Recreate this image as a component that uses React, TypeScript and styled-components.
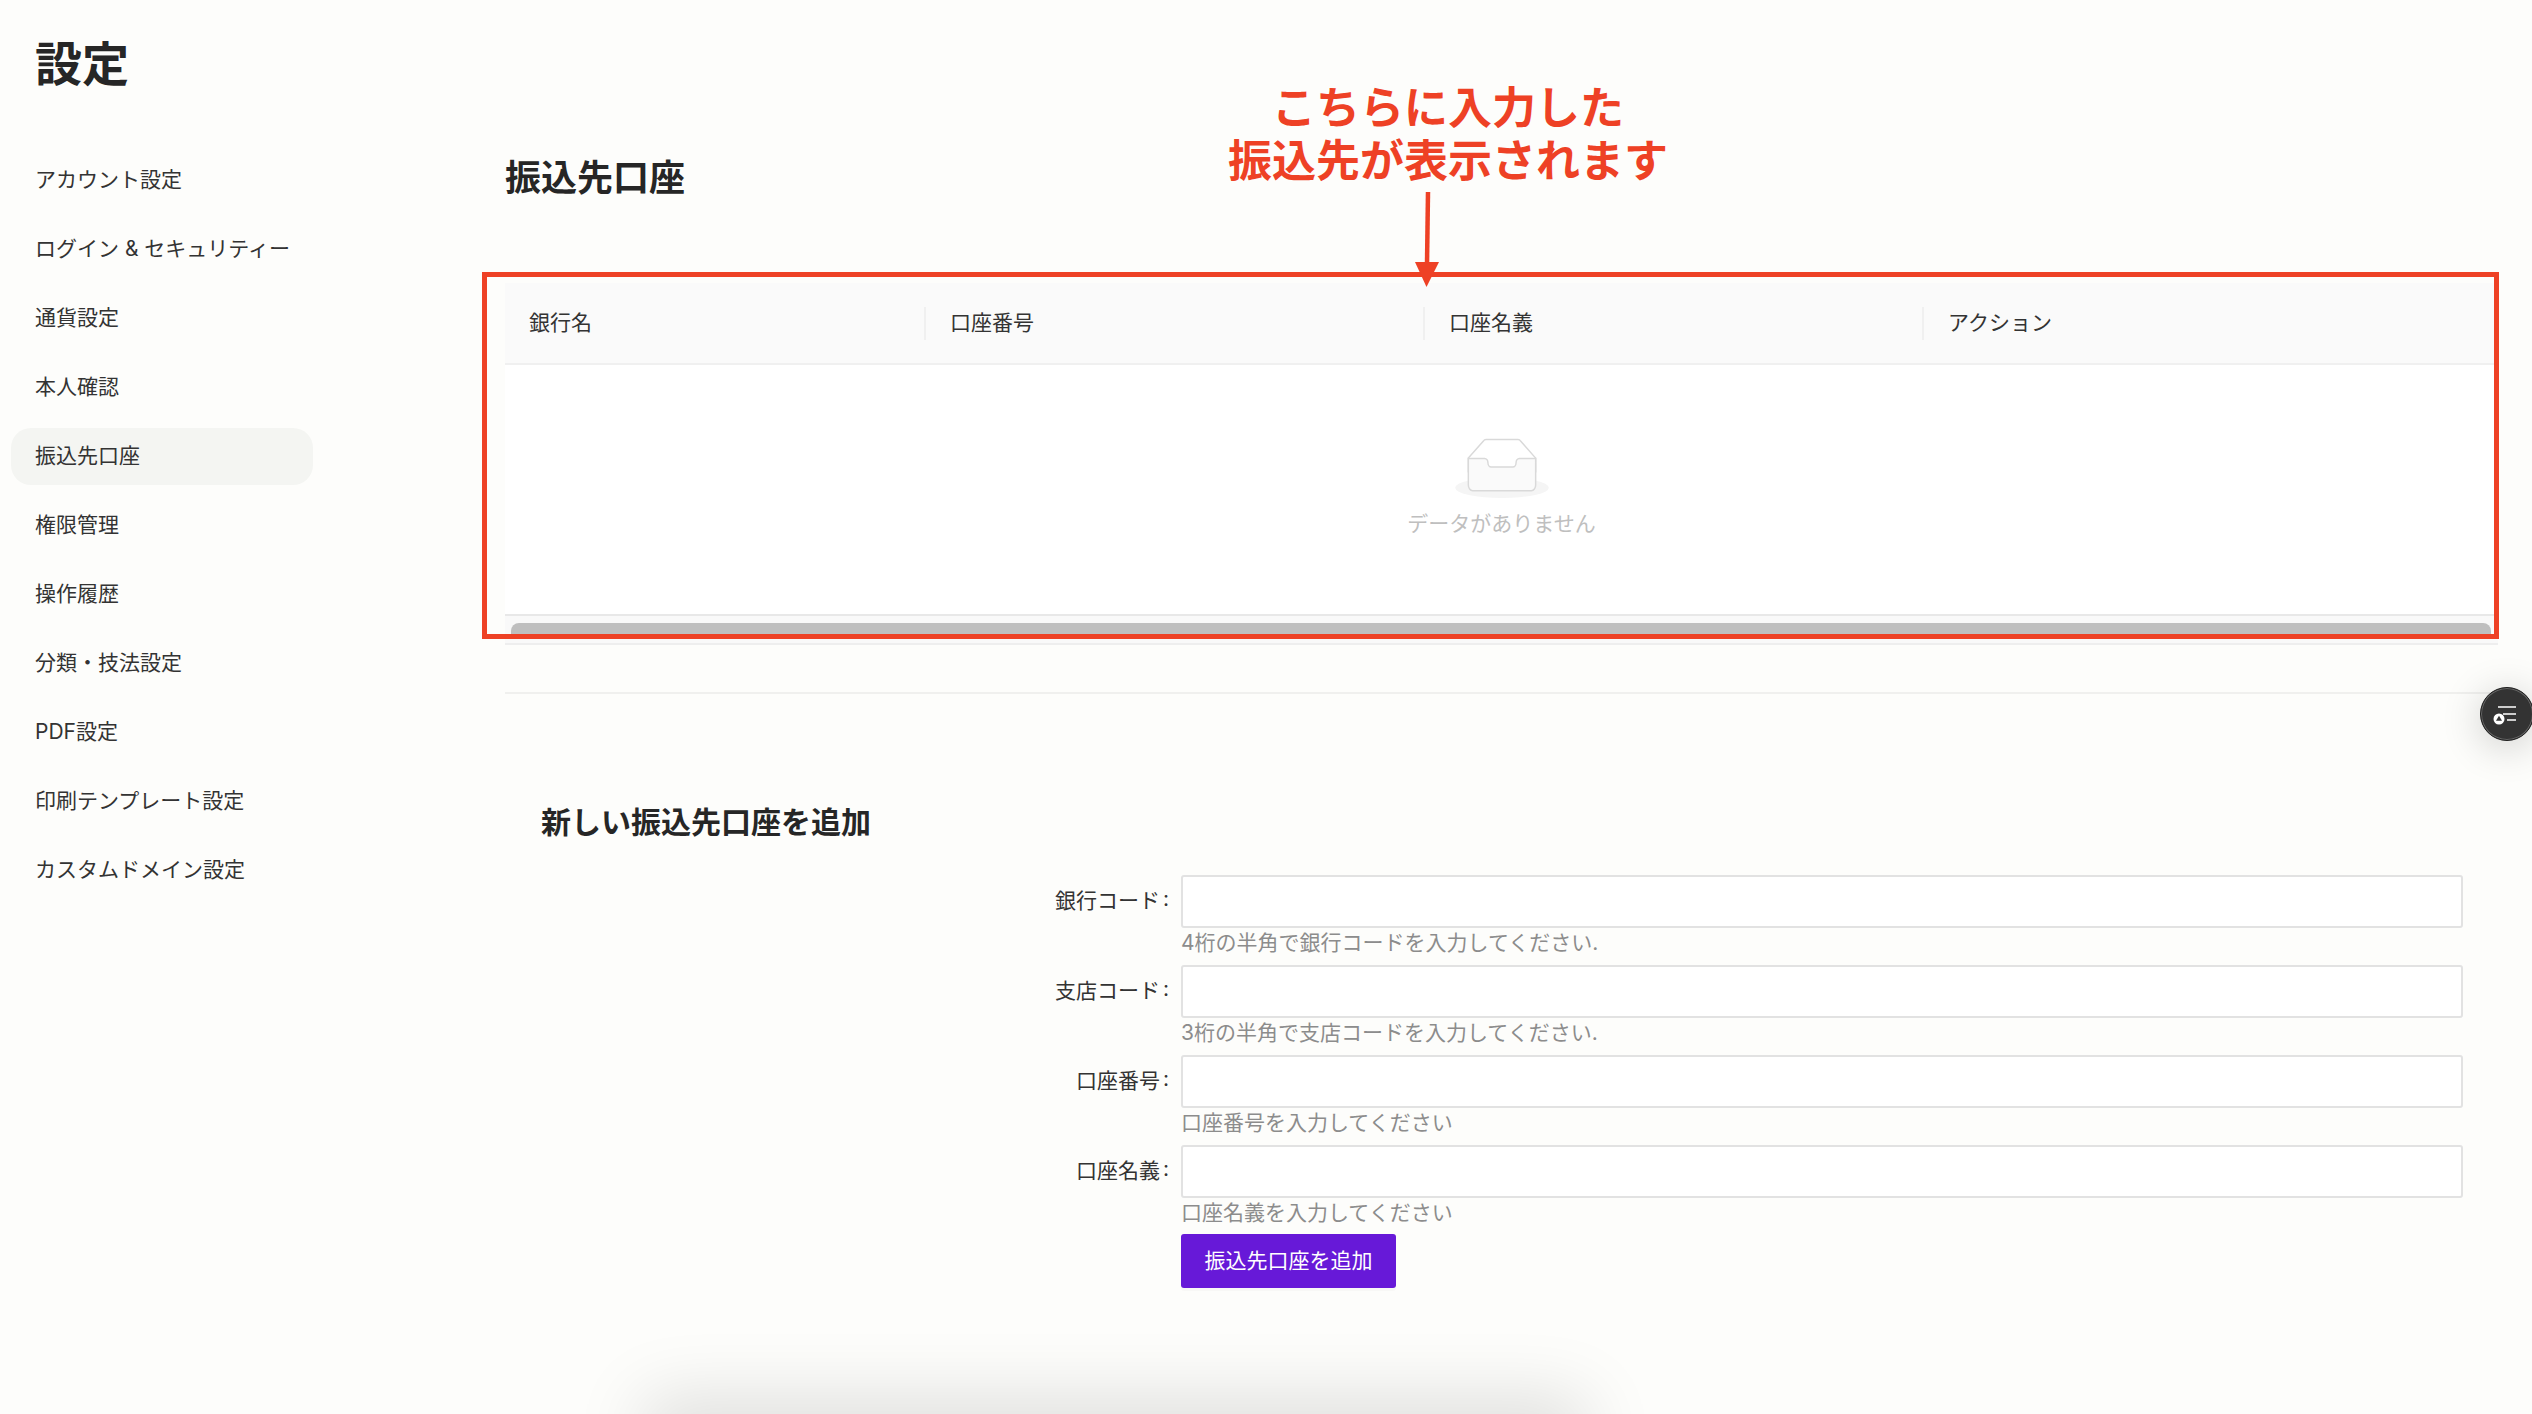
import styled, { createGlobalStyle } from 'styled-components'

const GlobalStyle = createGlobalStyle`
    html, body {
        margin: 0;
        padding: 0;
        background-color: #fdfdfb;
    }
    * {
        box-sizing: border-box;
    }
`

const Page = styled.div`
    position: relative;
    display: flex;
    width: 2532px;
    height: 1414px;
    overflow: hidden;
    background-color: #fdfdfb;
    color: #333333;
    font-family: Inter, 'Noto Sans CJK JP', sans-serif;
    font-size: 21px;
`

const Sidebar = styled.aside`
    flex: 0 0 505px;
    padding: 32px 0 0 11px;
`

const PageTitle = styled.h1`
    margin: 0 0 56px 24px;
    font-size: 47px;
    line-height: 64px;
    font-weight: 700;
    color: #262626;
`

const Nav = styled.nav`
    display: flex;
    flex-direction: column;
    gap: 12px;
    width: 302px;
`

const NavItem = styled.div<{ $active?: boolean }>`
    display: flex;
    align-items: center;
    height: 57px;
    padding: 0 0 5px 24px;
    border-radius: 20px;
    background-color: ${props => (props.$active ? '#f4f5f2' : 'transparent')};
    white-space: nowrap;
`

const Main = styled.main`
    flex: 1;
    padding: 153px 34px 0 0;
`

const SectionTitle = styled.h2`
    margin: 0 0 80px;
    font-size: 36px;
    line-height: 50px;
    font-weight: 700;
    color: #262626;
`

const Table = styled.div`
    background-color: #ffffff;
    border-bottom: 2px solid #eeeeee;
`

const TableHead = styled.div`
    display: grid;
    grid-template-columns: 419px 499px 499px 1fr;
    height: 82px;
    background-color: #fafafa;
    border-bottom: 2px solid #f0f0f0;
`

const HeadCell = styled.div`
    position: relative;
    display: flex;
    align-items: center;
    padding: 0 0 4px 24px;
    & + & {
        padding-left: 26px;
    }
    & + &::before {
        content: '';
        position: absolute;
        left: 0;
        top: 24px;
        height: 33px;
        width: 2px;
        background-color: #f0f0f0;
    }
`

const EmptyBody = styled.div`
    display: flex;
    flex-direction: column;
    align-items: center;
    height: 249px;
    padding-top: 73px;
    color: #bfbfbf;
`

const EmptyText = styled.div`
    margin-top: 10px;
    line-height: 32px;
`

const ScrollTrack = styled.div`
    height: 29px;
    padding: 7px 7px 0 6px;
    background-color: #f9f9f9;
    border-top: 2px solid #e8e8e8;
`

const ScrollThumb = styled.div`
    height: 14px;
    border-radius: 8px 8px 0 0;
    background-color: #bfbfbf;
`

const Divider = styled.hr`
    height: 2px;
    margin: 47px 0 107px;
    border: 0;
    background-color: #f0f0ee;
`

const FormSection = styled.section`
    padding: 0 35px 0 36px;
`

const FormTitle = styled.h3`
    margin: 0 0 32px;
    font-size: 30px;
    line-height: 42px;
    font-weight: 700;
    color: #262626;
`

const Row = styled.div`
    display: grid;
    grid-template-columns: 640px 1fr;
    margin-bottom: 7px;
`

const LabelText = styled.label`
    display: flex;
    align-items: center;
    justify-content: flex-end;
    height: 53px;
    padding: 0 12px 6px 0;
    white-space: nowrap;
    &::after {
        content: ':';
        margin-left: 3px;
    }
`

const Input = styled.input`
    display: block;
    width: 100%;
    height: 53px;
    background-color: #ffffff;
    border: 2px solid #e2e2e2;
    border-radius: 3px;
`

const Help = styled.div`
    height: 30px;
    line-height: 30px;
    color: #8c8c8c;
    white-space: nowrap;
`

const ButtonRow = styled.div`
    margin: -1px 0 0 640px;
`

const Button = styled.button`
    width: 215px;
    height: 54px;
    padding: 0 0 5px;
    border: 0;
    border-radius: 3px;
    background-color: #6719d8;
    color: #ffffff;
    font: inherit;
    box-shadow: 0 3px 0 rgba(0, 0, 0, 0.02);
`

const RedFrame = styled.div`
    position: absolute;
    left: 482px;
    top: 272px;
    width: 2017px;
    height: 367px;
    border: 5px solid #ee4125;
`

const Note = styled.div`
    position: absolute;
    left: 1148px;
    top: 82px;
    width: 600px;
    text-align: center;
    font-size: 44px;
    line-height: 53px;
    font-weight: 700;
    color: #ee4125;
`

const Arrow = styled.svg`
    position: absolute;
    left: 1410px;
    top: 190px;
`

const Fab = styled.button`
    position: absolute;
    left: 2480px;
    top: 687px;
    width: 54px;
    height: 54px;
    padding: 0;
    border: 1px solid #1f1f1f;
    border-radius: 50%;
    background-color: #333333;
    box-shadow: inset 0 0 0 1px #666666, 0 6px 40px rgba(0, 0, 0, 0.2);
`

const BottomGlow = styled.div`
    position: absolute;
    left: 660px;
    bottom: -40px;
    width: 910px;
    height: 40px;
    box-shadow: 0 0 70px 16px rgba(0, 0, 0, 0.13);
`

const navItems = [
    'アカウント設定',
    'ログイン & セキュリティー',
    '通貨設定',
    '本人確認',
    '振込先口座',
    '権限管理',
    '操作履歴',
    '分類・技法設定',
    'PDF設定',
    '印刷テンプレート設定',
    'カスタムドメイン設定',
]

const columns = ['銀行名', '口座番号', '口座名義', 'アクション']

const fields = [
    { label: '銀行コード', help: '4桁の半角で銀行コードを入力してください.' },
    { label: '支店コード', help: '3桁の半角で支店コードを入力してください.' },
    { label: '口座番号', help: '口座番号を入力してください' },
    { label: '口座名義', help: '口座名義を入力してください' },
]

function EmptyIcon() {
    return (
        <svg width="94" height="60" viewBox="0 0 64 41">
            <g transform="translate(0 1)" fill="none" fillRule="evenodd">
                <ellipse fill="#f5f5f5" cx="32" cy="33" rx="32" ry="7" />
                <g fillRule="nonzero" stroke="#d9d9d9">
                    <path d="M55 12.76L44.854 1.258C44.367.474 43.656 0 42.907 0H21.093c-.749 0-1.46.474-1.947 1.257L9 12.761V22h46v-9.24z" />
                    <path
                        d="M41.613 15.931c0-1.605.994-2.93 2.227-2.931H55v18.137C55 33.26 53.68 35 52.05 35h-40.1C10.32 35 9 33.259 9 31.137V13h11.16c1.233 0 2.227 1.323 2.227 2.928v.022c0 1.605 1.005 2.901 2.237 2.901h14.752c1.232 0 2.237-1.308 2.237-2.913v-.007z"
                        fill="#fafafa"
                    />
                </g>
            </g>
        </svg>
    )
}

function FabIcon() {
    return (
        <svg width="52" height="52" viewBox="0 0 52 52" fill="none">
            <path d="M17 19H35M22 26H35M26 32H35" stroke="#ffffff" strokeWidth="1.5" />
            <circle cx="18" cy="31" r="5.5" fill="#ffffff" />
            <path d="M18 27.8L21 32.8H15Z" fill="#333333" />
        </svg>
    )
}

function App() {
    return (
        <Page>
            <GlobalStyle />
            <Sidebar>
                <PageTitle>設定</PageTitle>
                <Nav>
                    {navItems.map(item => (
                        <NavItem key={item} $active={item === '振込先口座'}>
                            {item}
                        </NavItem>
                    ))}
                </Nav>
            </Sidebar>
            <Main>
                <SectionTitle>振込先口座</SectionTitle>
                <Table>
                    <TableHead>
                        {columns.map(column => (
                            <HeadCell key={column}>{column}</HeadCell>
                        ))}
                    </TableHead>
                    <EmptyBody>
                        <EmptyIcon />
                        <EmptyText>データがありません</EmptyText>
                    </EmptyBody>
                    <ScrollTrack>
                        <ScrollThumb />
                    </ScrollTrack>
                </Table>
                <Divider />
                <FormSection>
                    <FormTitle>新しい振込先口座を追加</FormTitle>
                    {fields.map(field => (
                        <Row key={field.label}>
                            <LabelText>{field.label}</LabelText>
                            <div>
                                <Input />
                                <Help>{field.help}</Help>
                            </div>
                        </Row>
                    ))}
                    <ButtonRow>
                        <Button>振込先口座を追加</Button>
                    </ButtonRow>
                </FormSection>
            </Main>
            <RedFrame />
            <Note>
                こちらに入力した
                <br />
                振込先が表示されます
            </Note>
            <Arrow width="36" height="100" viewBox="0 0 36 100" fill="none">
                <path d="M18 2L17 74" stroke="#ee4125" strokeWidth="4.5" />
                <path d="M5 72H29L16.5 97Z" fill="#ee4125" />
            </Arrow>
            <Fab>
                <FabIcon />
            </Fab>
            <BottomGlow />
        </Page>
    )
}

export default App
